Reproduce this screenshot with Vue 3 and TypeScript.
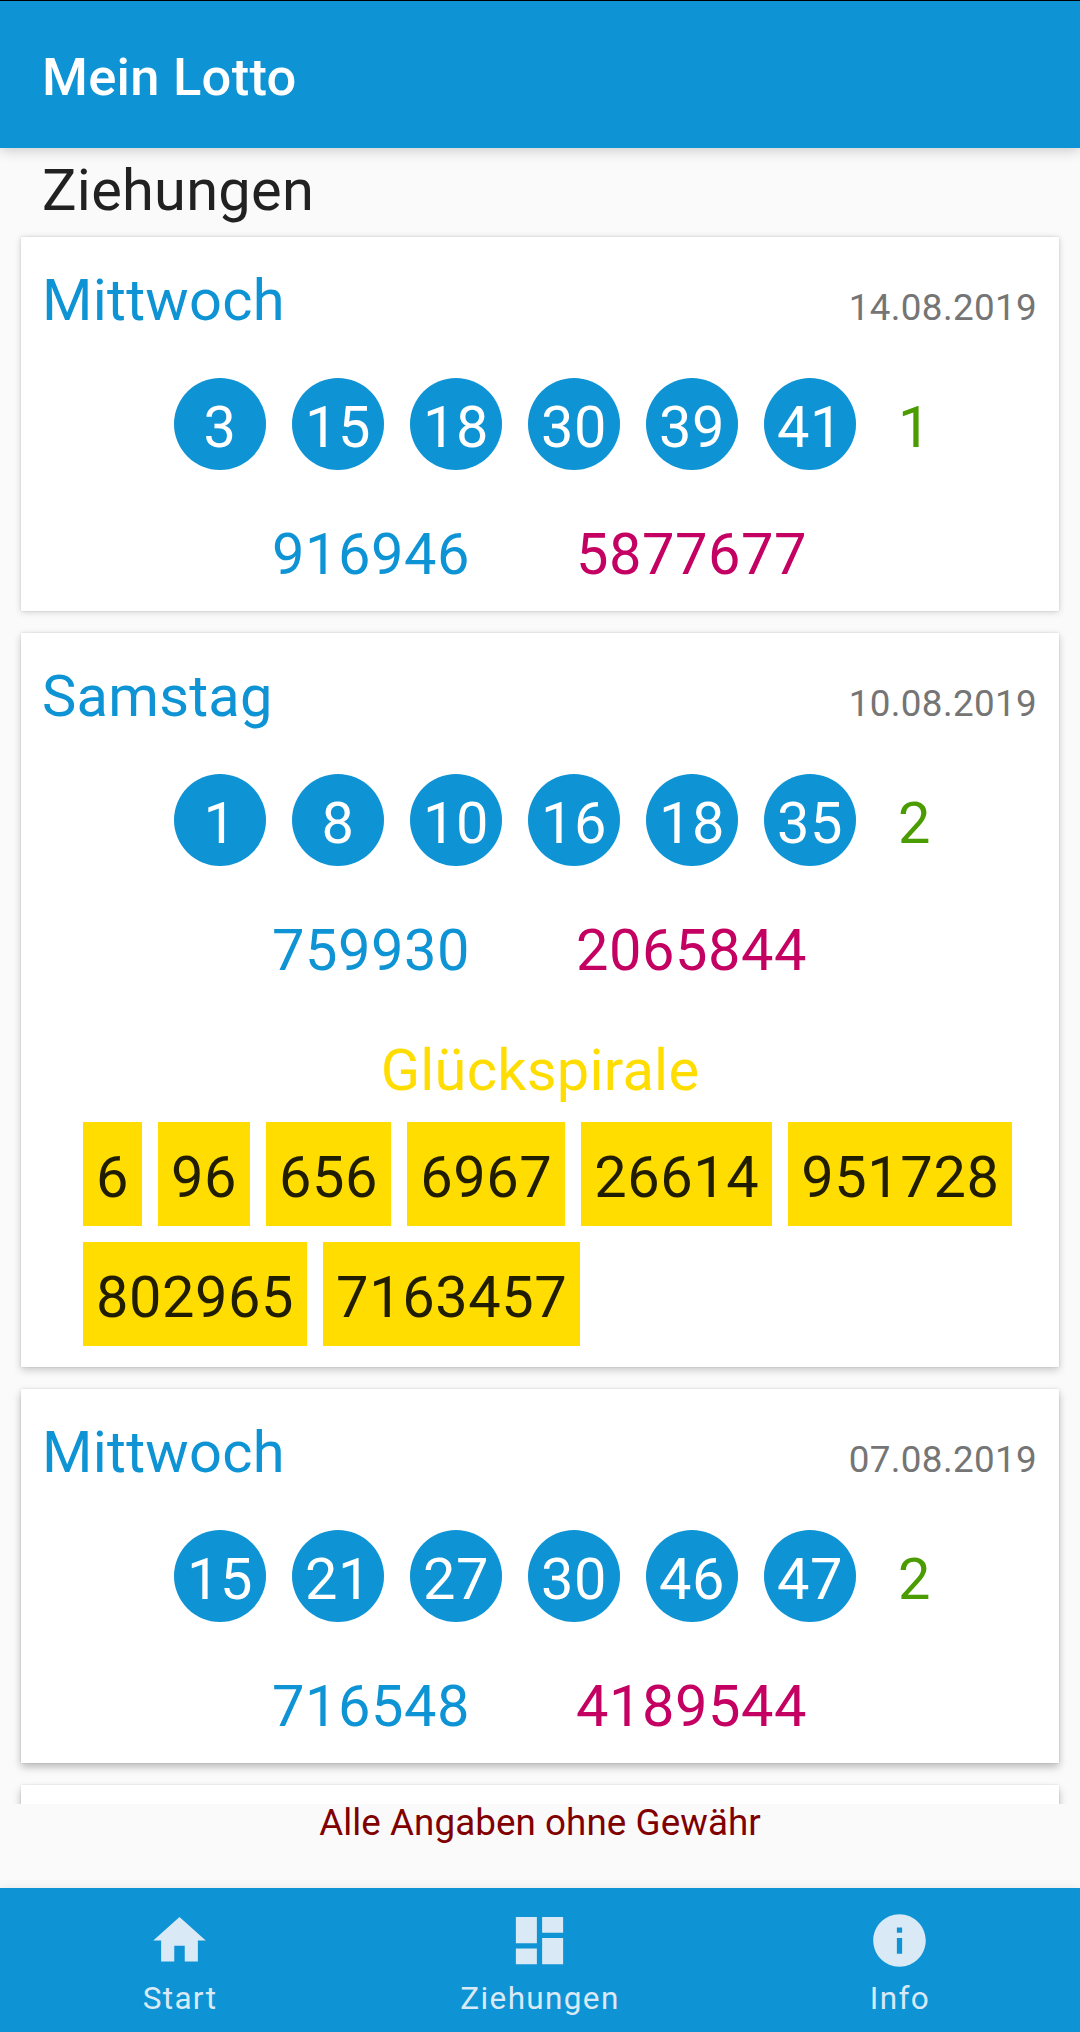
<script setup lang="ts">
interface Draw {
  day: string
  date: string
  balls: number[]
  extra: number
  game77: string
  super6: string
  spiral: string[]
  depth: string
}

const draws: Draw[] = [
  { day: 'Mittwoch', date: '14.08.2019', balls: [3, 15, 18, 30, 39, 41], extra: 1, super6: '916946', game77: '5877677', spiral: [], depth: 'd1' },
  {
    day: 'Samstag',
    date: '10.08.2019',
    balls: [1, 8, 10, 16, 18, 35],
    extra: 2,
    super6: '759930',
    game77: '2065844',
    spiral: ['6', '96', '656', '6967', '26614', '951728', '802965', '7163457'],
    depth: 'd2',
  },
  { day: 'Mittwoch', date: '07.08.2019', balls: [15, 21, 27, 30, 46, 47], extra: 2, super6: '716548', game77: '4189544', spiral: [], depth: 'd3' },
]

const tabs = [
  { label: 'Start', path: 'M10 20v-6h4v6h5v-8h3L12 3 2 12h3v8z' },
  { label: 'Ziehungen', path: 'M3 13h8V3H3v10zm0 8h8v-6H3v6zm10 0h8V11h-8v10zm0-18v6h8V3h-8z' },
  { label: 'Info', path: 'M12 2C6.48 2 2 6.48 2 12s4.48 10 10 10 10-4.48 10-10S17.52 2 12 2zm1 15h-2v-6h2v6zm0-8h-2V7h2v2z' },
]
</script>

<template>
  <div class="screen">
    <header class="appbar">Mein Lotto</header>
    <main class="content">
      <h1 class="heading">Ziehungen</h1>
      <div class="list">
        <section v-for="d in draws" :key="d.date" class="card" :class="d.depth">
          <div class="top">
            <span class="day">{{ d.day }}</span>
            <span class="date">{{ d.date }}</span>
          </div>
          <div class="balls">
            <span v-for="n in d.balls" :key="n" class="ball">{{ n }}</span>
            <span class="extra">{{ d.extra }}</span>
          </div>
          <div class="games">
            <span class="super6">{{ d.super6 }}</span>
            <span class="game77">{{ d.game77 }}</span>
          </div>
          <template v-if="d.spiral.length">
            <div class="spiral-title">Glückspirale</div>
            <div class="chips">
              <span v-for="c in d.spiral" :key="c" class="chip">{{ c }}</span>
            </div>
          </template>
        </section>
        <section class="card next d4"></section>
      </div>
      <p class="note">Alle Angaben ohne Gewähr</p>
    </main>
    <nav class="nav">
      <div v-for="t in tabs" :key="t.label" class="tab">
        <svg class="icon" viewBox="0 0 24 24"><path :d="t.path" /></svg>
        <span class="label">{{ t.label }}</span>
      </div>
    </nav>
  </div>
</template>

<style>
body {
  margin: 0;
  background: #fafafa;
}
</style>

<style scoped>
.screen {
  box-sizing: border-box;
  width: 1080px;
  height: 2032px;
  border-top: 1px solid #000;
  display: flex;
  flex-direction: column;
  overflow: hidden;
  background: #fafafa;
  font-family: Roboto, sans-serif;
  font-size: 57.75px;
  line-height: 68px;
  letter-spacing: 0.26px;
}
.appbar {
  position: relative;
  z-index: 1;
  flex: none;
  box-sizing: border-box;
  height: 147px;
  padding: 45px 42px 0;
  background: #0e93d4;
  color: #fff;
  font-size: 52.5px;
  font-weight: 500;
  line-height: 62px;
  box-shadow: 0 3px 12px rgba(0, 0, 0, 0.18);
}
.content {
  flex: 1;
  min-height: 0;
  display: flex;
  flex-direction: column;
}
.heading {
  flex: none;
  margin: 8px 42px 0;
  font-size: inherit;
  font-weight: 400;
  color: #212121;
}
.list {
  flex: none;
  box-sizing: border-box;
  height: 1580px;
  padding: 13px 21px 0;
  display: flex;
  flex-direction: column;
  gap: 22px;
  overflow: hidden;
}
.card {
  flex: none;
  box-sizing: border-box;
  padding: 29px 21px 23px;
  background: #fff;
}
.d1 { box-shadow: 0 1px 7px rgba(0, 0, 0, 0.16), 0 0 2px rgba(0, 0, 0, 0.14); }
.d2 { box-shadow: 0 3px 8px rgba(0, 0, 0, 0.2), 0 0 2px rgba(0, 0, 0, 0.14); padding-bottom: 21px; }
.d3 { box-shadow: 0 4px 8px rgba(0, 0, 0, 0.26), 0 0 2px rgba(0, 0, 0, 0.12); }
.d4 { box-shadow: 0 5px 8px rgba(0, 0, 0, 0.26), 0 0 2px rgba(0, 0, 0, 0.12); }
.next { height: 374px; }
.top {
  display: flex;
  justify-content: space-between;
  align-items: baseline;
  height: 68px;
}
.day { color: #0e93d4; }
.date {
  margin-right: 1px;
  color: #757575;
  font-size: 36.75px;
  line-height: 43px;
  letter-spacing: 0.36px;
}
.balls {
  display: flex;
  gap: 26px;
  margin: 44px 0 0 132px;
  letter-spacing: 0.56px;
}
.ball {
  box-sizing: border-box;
  width: 92px;
  height: 92px;
  padding-top: 15px;
  border-radius: 50%;
  background: #0e93d4;
  color: #fff;
  text-align: center;
}
.extra {
  padding: 15px 0 0 16px;
  color: #4a9c00;
}
.games {
  display: flex;
  justify-content: center;
  gap: 106px;
  margin: 50px 1px 0 0;
  letter-spacing: 0.56px;
}
.super6 { color: #0e93d4; }
.game77 { color: #c40062; }
.spiral-title {
  margin-top: 52px;
  text-align: center;
  color: #fd0;
}
.chips {
  display: flex;
  flex-wrap: wrap;
  gap: 16px;
  margin: 18px 0 0 41px;
  letter-spacing: 0.56px;
}
.chip {
  padding: 21px 13px 15px;
  background: #fd0;
  color: rgba(0, 0, 0, 0.87);
}
.note {
  margin: 0;
  text-align: center;
  color: #800000;
  font-size: 36.75px;
  line-height: 37px;
  letter-spacing: 0.08px;
}
.nav {
  position: relative;
  flex: none;
  height: 144px;
  display: flex;
  background: #0e93d4;
  color: #d9e9f6;
  box-shadow: 0 0 10px rgba(0, 0, 0, 0.08);
}
.tab {
  flex: 1;
  display: flex;
  flex-direction: column;
  align-items: center;
  padding-top: 21px;
}
.icon {
  display: block;
  width: 63px;
  height: 63px;
  margin-right: 1px;
  fill: currentColor;
}
.label {
  margin-top: 8px;
  font-size: 31.5px;
  line-height: 38px;
  letter-spacing: 1.35px;
}
</style>
